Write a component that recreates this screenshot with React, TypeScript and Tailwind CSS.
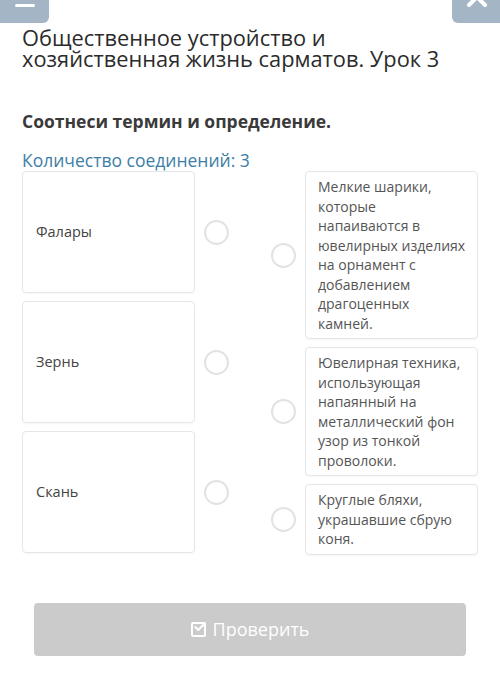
import { Check } from "lucide-react";

const terms = ["Фалары", "Зернь", "Скань"];

// newlines mark where the narrow card column breaks these lines
const definitions = [
  "Мелкие шарики, которые напаиваются в ювелирных изделиях на орнамент с добавлением драгоценных\nкамней.",
  "Ювелирная техника, использующая напаянный на металлический фон узор из тонкой проволоки.",
  "Круглые бляхи, украшавшие сбрую коня.",
];

function Dot() {
  return <div className="h-[25px] w-[25px] shrink-0 rounded-full border-2 border-[#e2e2e2] bg-white" />;
}

export default function App() {
  return (
    <div className="min-h-[697px] bg-white font-['Open_Sans',sans-serif] text-[#333]">
      {/* top bar: menu + close */}
      <div className="flex justify-between">
        <div className="flex h-[23px] w-[49px] items-start justify-center rounded-br-md bg-[#a4b6c6] pt-[4px]">
          <div className="h-[3px] w-[20px] rounded-sm bg-white" />
        </div>
        <div className="relative h-[23px] w-[48px] overflow-hidden rounded-bl-md bg-[#a4b6c6]">
          <svg className="absolute left-[14px] top-[-14px]" width="22" height="22" viewBox="0 0 22 22">
            <path d="M3 3 L19 19 M19 3 L3 19" stroke="white" strokeWidth="4" strokeLinecap="round" />
          </svg>
        </div>
      </div>

      <div className="px-[22px]">
        <h1 className="mt-[4px] max-w-[440px] text-[21.8px] leading-[21px] text-[#2b2b2b]">
          Общественное устройство и хозяйственная жизнь сарматов. Урок 3
        </h1>

        <p className="mt-[41px] text-[17.5px] font-bold leading-[22px] text-[#3a3a3a]">Соотнеси термин и определение.</p>

        <p className="mt-[17px] text-[17.5px] leading-[22px] text-[#3d7ea6]">Количество соединений: 3</p>

        <div className="flex justify-between">
          <div className="flex flex-col gap-[8px]">
            {terms.map((t) => (
              <div key={t} className="flex items-center gap-[9px]">
                <div className="flex h-[122px] w-[173px] items-center rounded-[4px] border border-[#e6e6e6] px-[13px] text-[14.5px] text-[#444] shadow-[0_1px_2px_rgba(0,0,0,0.04)]">
                  {t}
                </div>
                <Dot />
              </div>
            ))}
          </div>

          <div className="flex flex-col gap-[8px]">
            {definitions.map((d) => (
              <div key={d} className="flex items-center gap-[9px]">
                <Dot />
                <div className="w-[173px] whitespace-pre-line rounded-[4px] border border-[#e6e6e6] py-[5px] pl-[12px] pr-[9px] text-[14px] leading-[19.5px] text-[#555] shadow-[0_1px_2px_rgba(0,0,0,0.04)]">
                  {d}
                </div>
              </div>
            ))}
          </div>
        </div>
      </div>

      <div className="mt-[48px] px-[34px]">
        <button className="flex h-[53px] w-full items-center justify-center gap-[7px] rounded-[4px] bg-[#cbcbcb] text-[18px] text-white">
          <span className="relative flex h-[15px] w-[15px] items-center justify-center rounded-[2px] border-2 border-white">
            <Check className="absolute -right-[3px] -top-[4px]" size={14} strokeWidth={3.5} color="white" />
          </span>
          Проверить
        </button>
      </div>
    </div>
  );
}
